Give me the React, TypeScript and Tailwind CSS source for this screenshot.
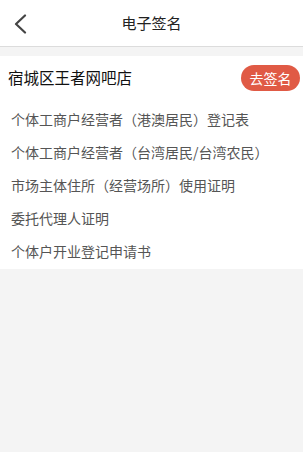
import React from "react";

const items = [
  "个体工商户经营者（港澳居民）登记表",
  "个体工商户经营者（台湾居民/台湾农民）",
  "市场主体住所（经营场所）使用证明",
  "委托代理人证明",
  "个体户开业登记申请书",
];

export default function App() {
  return (
    <div
      className="w-[303px] h-[452px] bg-[#f4f4f4] overflow-hidden"
      style={{ fontFamily: '"Noto Sans CJK SC", "Noto Sans", sans-serif' }}
    >
      <div className="relative h-[47px] bg-white border-b border-[#dcdcdc] flex items-center justify-center">
        <svg
          className="absolute left-[13px] top-[14px]"
          width="14"
          height="20"
          viewBox="0 0 14 20"
          fill="none"
        >
          <path d="M12 1.5 L3 10 L12 18.5" stroke="#444" strokeWidth="2.2" strokeLinecap="round" strokeLinejoin="round" />
        </svg>
        <span className="text-[15px] text-[#222]">电子签名</span>
      </div>
      <div className="mt-[9px] bg-white pb-[1px]">
        <div className="flex items-center justify-between pl-[8px] pr-[3px] h-[44px]">
          <span className="text-[15.5px] text-[#111]">宿城区王者网吧店</span>
          <span className="h-[26px] w-[59px] justify-center rounded-full bg-[#e05a45] text-white text-[14px] flex items-center leading-none">
            去签名
          </span>
        </div>
        <div className="pt-[3px]">
          {items.map((t) => (
            <div key={t} className="h-[33px] flex items-center pl-[11px] text-[14px] text-[#555]">
              {t}
            </div>
          ))}
        </div>
      </div>
    </div>
  );
}
